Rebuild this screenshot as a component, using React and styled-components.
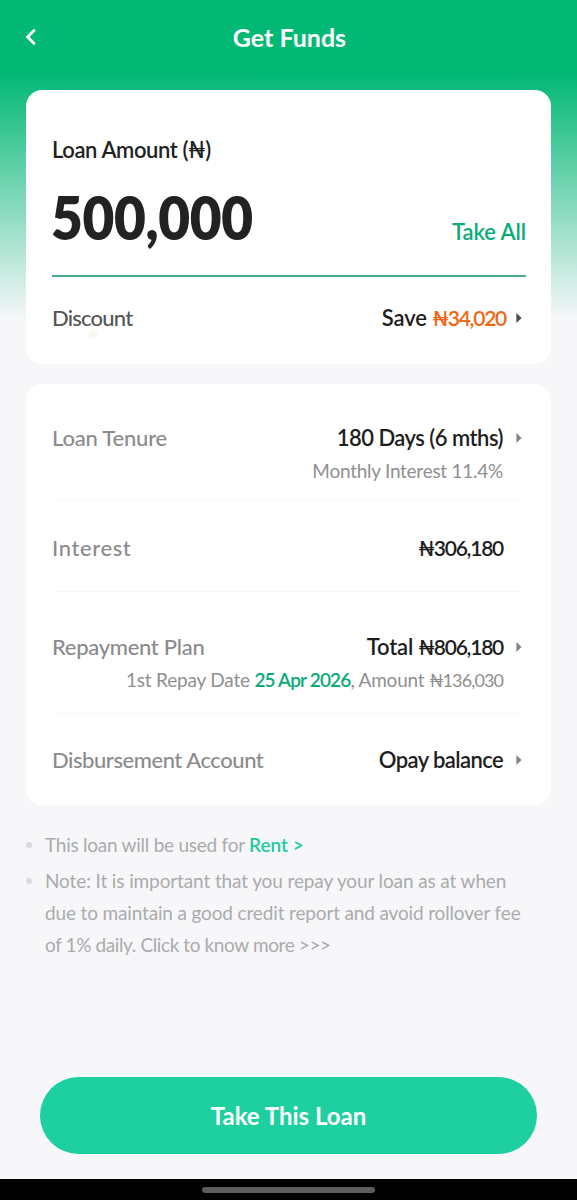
import React from 'react';
import styled, { createGlobalStyle } from 'styled-components';

const GlobalStyle = createGlobalStyle`
  * {
    box-sizing: border-box;
  }

  body {
    margin: 0;
    background: #f7f7fa;
    font-family: Lato, 'Liberation Sans', sans-serif;
  }

  h1, p, ul {
    margin: 0;
    padding: 0;
  }
`;

const Arrow = ({ color = '#858585' }) => (
  <ArrowSvg viewBox="0 0 6 10">
    <path d="M0.4 0 L5.6 5 L0.4 10 Z" fill={color} />
  </ArrowSvg>
);

const App = () => {
  return (
    <Screen>
      <GlobalStyle />
      <Header>
        <BackButton aria-label="Back">
          <svg width="12" height="18" viewBox="0 0 12 18" fill="none">
            <path d="M9.8 1.8 L2.6 9 L9.8 16.2" stroke="#fff" strokeWidth="2.8" />
          </svg>
        </BackButton>
        <PageTitle>Get Funds</PageTitle>
      </Header>

      <AmountCard>
        <AmountLabel>Loan Amount (₦)</AmountLabel>
        <AmountRow>
          <AmountValue>500,000</AmountValue>
          <TakeAll>Take All</TakeAll>
        </AmountRow>
        <DiscountRow>
          <Label dark spacing={-0.8}>
            Discount
            <TapMark viewBox="0 0 12 12">
              <path d="M1 6 L6 1 L11 6 L9 11 L6 8 L3 11 Z" fill="#fcf6f0" />
            </TapMark>
          </Label>
          <Value spacing={-0.1}>
            Save <Saving>₦34,020</Saving>
          </Value>
          <ArrowSlot>
            <Arrow color="#4c4c4c" />
          </ArrowSlot>
        </DiscountRow>
      </AmountCard>

      <DetailCard>
        <DetailRow height={116} top={41}>
          <Label spacing={-0.2}>Loan Tenure</Label>
          <Value spacing={-0.52}>180 Days (6 mths)</Value>
          <ArrowSlot>
            <Arrow />
          </ArrowSlot>
          <Hint spacing={-0.26}>Monthly Interest 11.4%</Hint>
        </DetailRow>
        <DetailRow height={92} top={35}>
          <Label spacing={0.6}>Interest</Label>
          <Value>
            <Naira>₦306,180</Naira>
          </Value>
        </DetailRow>
        <DetailRow height={122} top={42}>
          <Label spacing={-0.3}>Repayment Plan</Label>
          <Value spacing={-0.2}>
            Total <Naira>₦806,180</Naira>
          </Value>
          <ArrowSlot>
            <Arrow />
          </ArrowSlot>
          <Hint spacing={-0.2}>
            1st Repay Date <DueDate>25 Apr 2026</DueDate>, Amount <HintNaira>₦136,030</HintNaira>
          </Hint>
        </DetailRow>
        <DetailRow height={91} top={33}>
          <Label spacing={-0.45}>Disbursement Account</Label>
          <Value spacing={-0.6}>Opay balance</Value>
          <ArrowSlot>
            <Arrow />
          </ArrowSlot>
        </DetailRow>
      </DetailCard>

      <Notes>
        <Note>
          <NoteLine spacing={-0.25}>
            This loan will be used for <Purpose>Rent &gt;</Purpose>
          </NoteLine>
        </Note>
        <Note>
          <NoteLine spacing={-0.12}>Note: It is important that you repay your loan as at when</NoteLine>
          <NoteLine spacing={-0.15}>due to maintain a good credit report and avoid rollover fee</NoteLine>
          <NoteLine spacing={-0.39}>of 1% daily. Click to know more &gt;&gt;&gt;</NoteLine>
        </Note>
      </Notes>

      <SubmitButton>Take This Loan</SubmitButton>
      <NavBar>
        <NavHandle />
      </NavBar>
    </Screen>
  );
};

export default App;

const Screen = styled.div`
  display: flex;
  flex-direction: column;
  width: 100%;
  height: 1200px;
  background: linear-gradient(#02b875 0, #02b875 74px, #f7f7fa 320px);
`;

const Header = styled.header`
  display: grid;
  grid-template-columns: 61px 1fr 59px;
  align-items: center;
  height: 76px;
  padding-bottom: 2px;
`;

const BackButton = styled.button`
  display: flex;
  width: 60px;
  padding: 0 0 0 25px;
  border: none;
  background: none;
`;

const PageTitle = styled.h1`
  color: #fff;
  font-size: 25px;
  font-weight: 700;
  line-height: 30px;
  text-align: center;
`;

const Card = styled.section`
  margin: 0 26px;
  padding: 0 26px;
  border-radius: 16px;
  background: #fff;
`;

const AmountCard = styled(Card)`
  height: 274px;
  margin-top: 14px;
  padding-top: 47px;
`;

const AmountLabel = styled.p`
  color: #222;
  font-size: 22px;
  font-weight: 600;
  line-height: 26px;
  letter-spacing: -0.4px;
`;

const AmountRow = styled.div`
  display: flex;
  align-items: flex-end;
  justify-content: space-between;
  height: 114px;
  margin-right: -1px;
  padding-bottom: 22px;
  border-bottom: 2px solid #4aab8e;
`;

const AmountValue = styled.span`
  margin-left: -1px;
  color: #222;
  font-size: 61px;
  font-weight: 800;
  line-height: 72px;
  letter-spacing: -0.4px;
  transform: scaleX(0.9);
  transform-origin: left;
`;

const TakeAll = styled.span`
  margin-bottom: 8px;
  color: #0aac76;
  font-size: 22px;
  font-weight: 600;
  line-height: 26px;
  letter-spacing: -0.1px;
`;

const Row = styled.div`
  display: grid;
  grid-template-columns: auto 1fr 22px;
  grid-auto-rows: 26px;
  row-gap: 8px;
`;

const DiscountRow = styled(Row)`
  grid-template-columns: auto 1fr 19px;
  padding-top: 28px;
`;

const Label = styled.span`
  position: relative;
  color: ${({ dark }) => (dark ? '#555' : '#8b8b8b')};
  font-size: 22px;
  font-weight: 500;
  line-height: 26px;
  letter-spacing: ${({ spacing }) => spacing}px;
`;

const TapMark = styled.svg`
  position: absolute;
  top: 23px;
  left: 35px;
  width: 12px;
  height: 12px;
`;

const Value = styled.span`
  color: #1e1e1e;
  font-size: 22px;
  font-weight: 600;
  line-height: 26px;
  letter-spacing: ${({ spacing = 0 }) => spacing}px;
  text-align: right;
`;

const Naira = styled.span`
  font-size: 21px;
  letter-spacing: -1.25px;
`;

const Saving = styled(Naira)`
  color: #f26411;
`;

const ArrowSlot = styled.span`
  display: flex;
  align-items: center;
  justify-content: flex-end;
  padding-right: 3px;
`;

const ArrowSvg = styled.svg`
  width: 6px;
  height: 10px;
`;

const DetailCard = styled(Card)`
  height: 421px;
  margin-top: 20px;
`;

const DetailRow = styled(Row)`
  height: ${({ height }) => height}px;
  padding-top: ${({ top }) => top}px;

  &:not(:last-child) {
    background: linear-gradient(#f7f7f8, #f7f7f8) 2px 100% / calc(100% - 4px) 1px no-repeat;
  }
`;

const Hint = styled.span`
  grid-column: 1 / 3;
  color: #8f8f8f;
  font-size: 19px;
  line-height: 24px;
  letter-spacing: ${({ spacing }) => spacing}px;
  text-align: right;
`;

const HintNaira = styled.span`
  font-size: 18px;
  letter-spacing: -0.9px;
`;

const DueDate = styled.span`
  color: #0aac76;
  font-weight: 600;
  letter-spacing: -0.85px;
`;

const Notes = styled.ul`
  display: flex;
  flex-direction: column;
  gap: 4px;
  margin: 24px 26px 0;
  list-style: none;
`;

const Note = styled.li`
  display: grid;
  grid-template-columns: 19px 1fr;

  &::before {
    content: '';
    width: 6px;
    height: 6px;
    margin-top: 13px;
    border-radius: 50%;
    background: #d9dadb;
  }
`;

const NoteLine = styled.p`
  grid-column: 2;
  color: #aaabac;
  font-size: 19px;
  line-height: 32px;
  letter-spacing: ${({ spacing }) => spacing}px;
  white-space: nowrap;
`;

const Purpose = styled.span`
  color: #20cc9b;
  font-weight: 600;
  letter-spacing: 0;
`;

const SubmitButton = styled.button`
  height: 77px;
  margin: auto 40px 25px;
  border: none;
  border-radius: 39px;
  background: #1ed0a0;
  color: #fff;
  font-family: inherit;
  font-size: 24px;
  font-weight: 700;
`;

const NavBar = styled.footer`
  display: flex;
  align-items: center;
  justify-content: center;
  height: 21px;
  background: #000;
`;

const NavHandle = styled.div`
  width: 173px;
  height: 6px;
  border-radius: 3px;
  background: #5e5c5d;
`;
